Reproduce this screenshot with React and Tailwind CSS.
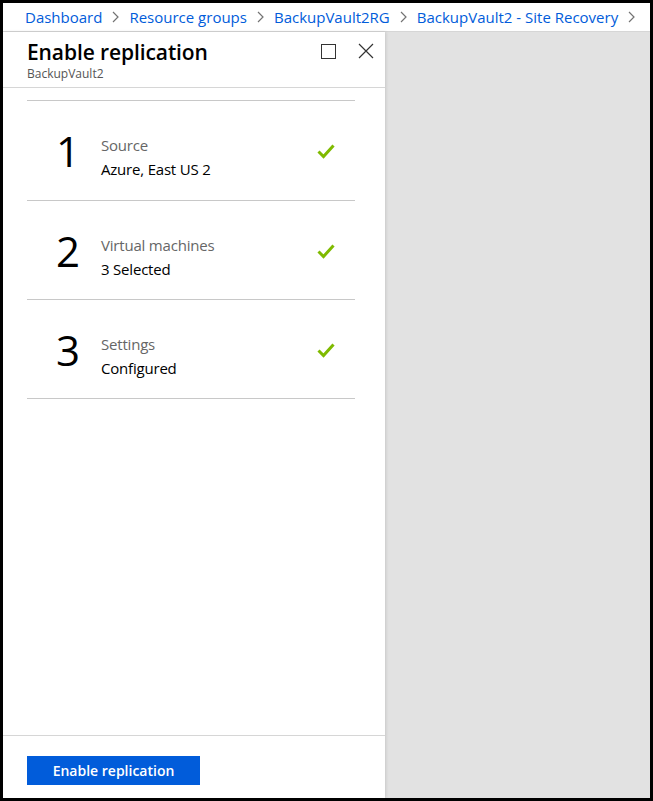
import React from 'react';

const crumbs = ['Dashboard', 'Resource groups', 'BackupVault2RG', 'BackupVault2 - Site Recovery'];

const steps = [
  { n: '1', label: 'Source', value: 'Azure, East US 2' },
  { n: '2', label: 'Virtual machines', value: '3 Selected' },
  { n: '3', label: 'Settings', value: 'Configured' },
];

const Chevron = () => (
  <svg width="7" height="12" viewBox="0 0 7 12" className="mx-[10px] shrink-0">
    <path d="M1 1 L6 6 L1 11" fill="none" stroke="#737373" strokeWidth="1.2" />
  </svg>
);

const Check = () => (
  <svg width="18" height="15" viewBox="0 0 18 15">
    <path d="M1.5 7.5 L6.5 12.5 L16.5 1.5" fill="none" stroke="#7fba00" strokeWidth="3" />
  </svg>
);

const App = () => {
  return (
    <div
      className="w-[653px] h-[801px] border-[3px] border-black flex flex-col bg-white overflow-hidden"
      style={{ fontFamily: '"Open Sans", "Noto Sans", sans-serif' }}
    >
      {/* Breadcrumb */}
      <div className="h-[29px] shrink-0 border-b border-[#d6d6d6] flex items-center pl-[22px] text-[15px] text-[#015cda] whitespace-nowrap overflow-hidden">
        {crumbs.map((c) => (
          <React.Fragment key={c}>
            <span>{c}</span>
            <Chevron />
          </React.Fragment>
        ))}
      </div>

      <div className="flex flex-1 min-h-0">
        {/* Blade */}
        <div className="w-[382px] shrink-0 bg-white flex flex-col shadow-[1px_0_3px_rgba(0,0,0,0.12)] z-10">
          {/* Header */}
          <div className="h-[56px] shrink-0 border-b border-[#d6d6d6] flex items-start justify-between pl-[24px] pr-[11px] pt-[7px]">
            <div>
              <h1 className="text-[21px] leading-[26px] font-semibold text-black tracking-[-0.1px]">Enable replication</h1>
              <p className="text-[12px] leading-[13px] text-[#555] mt-[2px]">BackupVault2</p>
            </div>
            <div className="flex items-center gap-[22px] pt-[4px]">
              <div className="w-[15px] h-[15px] border border-[#333]" />
              <svg width="16" height="16" viewBox="0 0 16 16">
                <path d="M1 1 L15 15 M15 1 L1 15" stroke="#333" strokeWidth="1.2" />
              </svg>
            </div>
          </div>

          {/* Steps */}
          <div className="flex-1 px-[24px] pt-[12px]">
            <div className="w-[328px] border-t border-[#c8c8c8]">
              {steps.map((s, i) => (
                <div
                  key={s.n}
                  className={`${i === 0 ? 'h-[100px]' : 'h-[99px]'} border-b border-[#c8c8c8] flex items-start pr-[20px]`}
                >
                  <div className="w-[74px] pl-[8px] text-center text-[42px] leading-[42px] font-medium text-black pt-[29px]">{s.n}</div>
                  <div className="flex-1 pt-[32px] text-[15px] leading-[24px] tracking-[-0.2px]">
                    <div className="text-[#666]">{s.label}</div>
                    <div className="text-black">{s.value}</div>
                  </div>
                  <div className="pt-[43px]">
                    <Check />
                  </div>
                </div>
              ))}
            </div>
          </div>

          {/* Footer */}
          <div className="shrink-0 border-t border-[#d6d6d6] px-[24px] pt-[20px] pb-[13px]">
            <button className="w-[173px] h-[29px] bg-[#015cda] text-white text-[14px] font-semibold flex items-center justify-center">
              Enable replication
            </button>
          </div>
        </div>

        {/* Right area */}
        <div className="flex-1 bg-[#e2e2e2]" />
      </div>
    </div>
  );
};

export default App;
